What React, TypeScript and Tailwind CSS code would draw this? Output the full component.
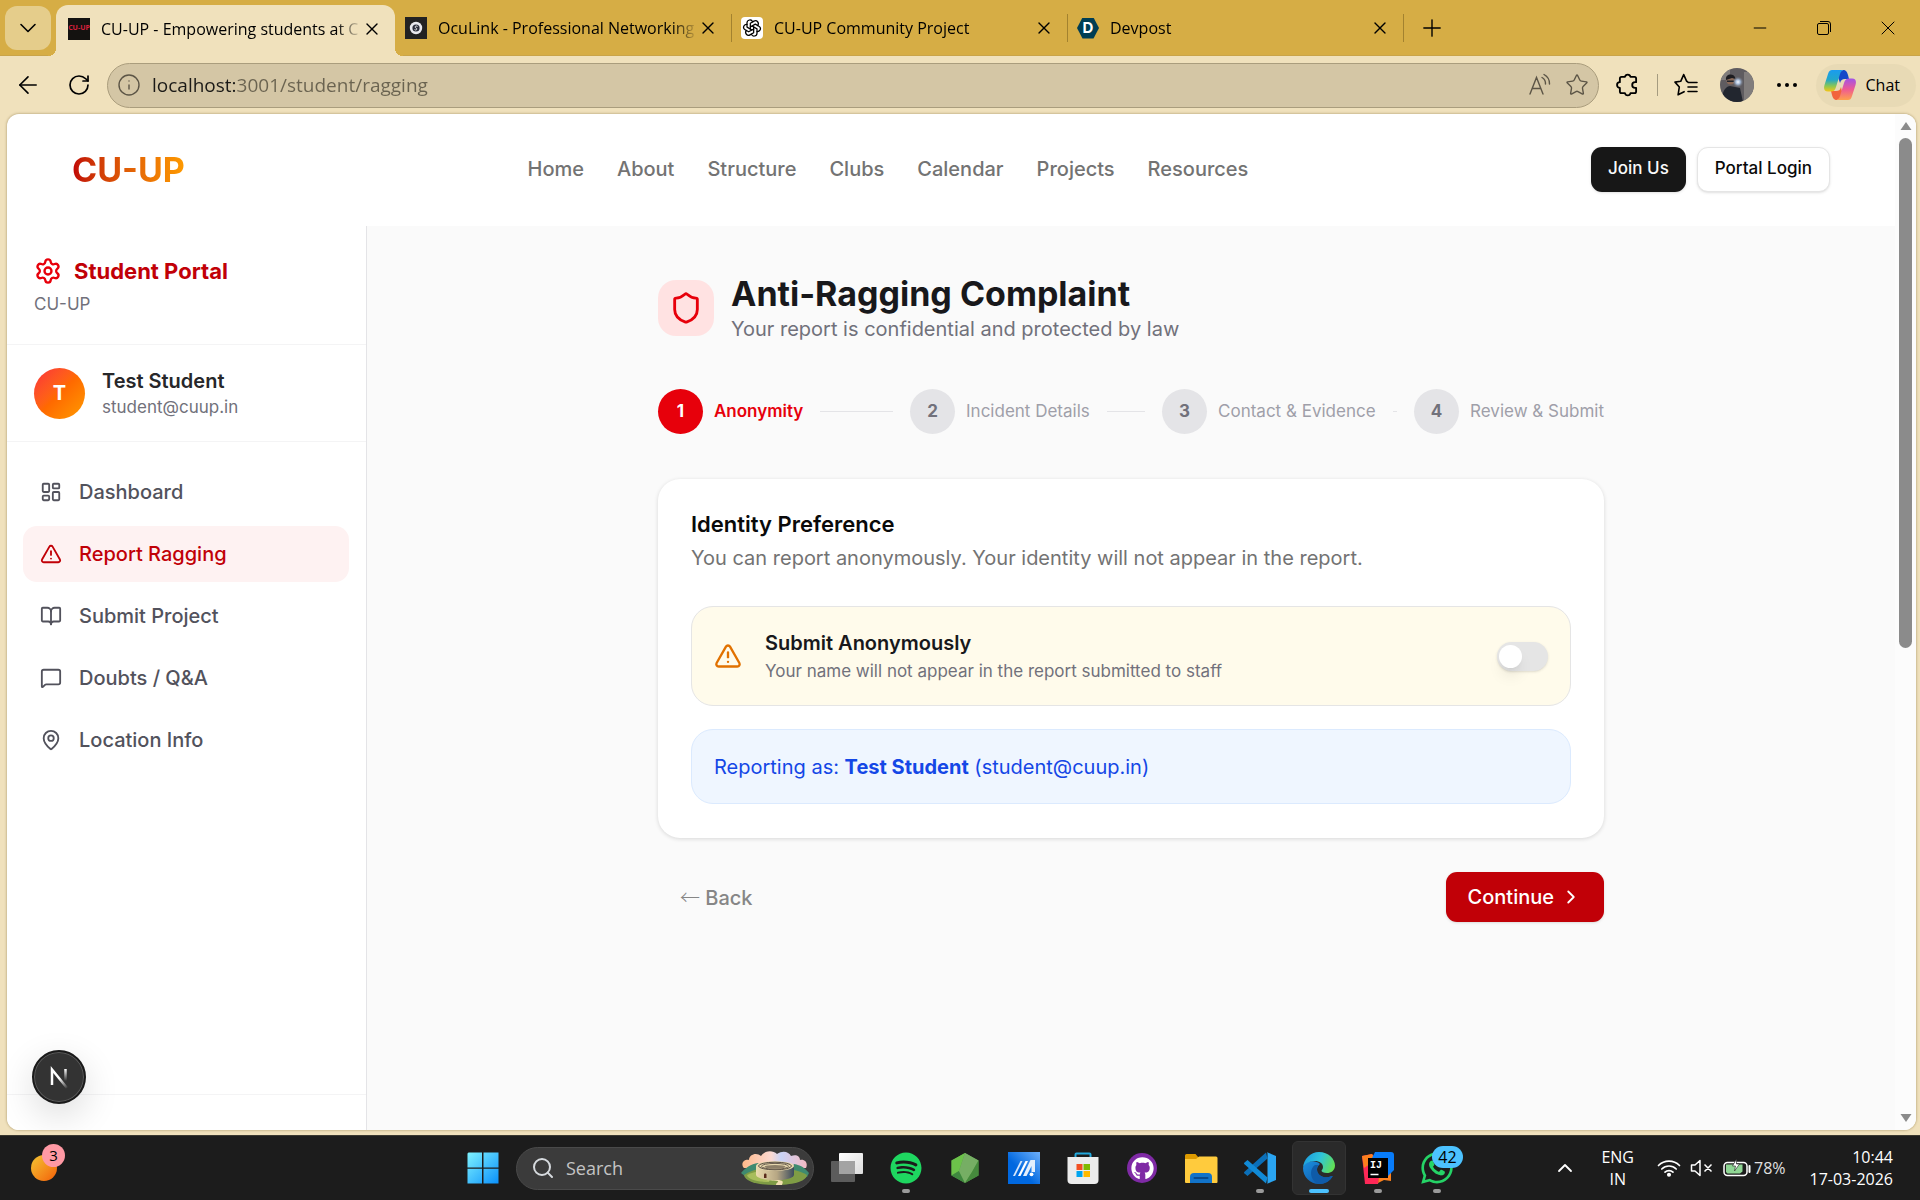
import type { ReactNode } from 'react'
import {
  ArrowLeft,
  BookOpen,
  ChevronDown,
  ChevronRight,
  ChevronUp,
  Info,
  LayoutDashboard,
  MapPin,
  MessageSquare,
  Minus,
  Plus,
  RotateCw,
  Search,
  Settings,
  Shield,
  Star,
  TriangleAlert,
  X,
} from 'lucide-react'
import type { LucideIcon } from 'lucide-react'
import { FaGithub, FaSpotify, FaWhatsapp } from 'react-icons/fa'
import { TbBrandOpenai } from 'react-icons/tb'
import clsx from 'clsx'

const siteLinks = ['Home', 'About', 'Structure', 'Clubs', 'Calendar', 'Projects', 'Resources']

const portalLinks: { label: string; icon: LucideIcon; active?: boolean }[] = [
  { label: 'Dashboard', icon: LayoutDashboard },
  { label: 'Report Ragging', icon: TriangleAlert, active: true },
  { label: 'Submit Project', icon: BookOpen },
  { label: 'Doubts / Q&A', icon: MessageSquare },
  { label: 'Location Info', icon: MapPin },
]

const steps = ['Anonymity', 'Incident Details', 'Contact & Evidence', 'Review & Submit']

export default function App() {
  return (
    <div className="flex h-screen min-h-[900px] flex-col overflow-hidden bg-[#f0e1bc] font-['Open_Sans',sans-serif] text-black">
      <TabStrip />
      <Toolbar />
      <div className="mr-1 mb-[5px] ml-[7px] flex min-h-0 flex-1 overflow-hidden rounded-xl bg-white font-['Inter',sans-serif] shadow-[0_0_2px_1px_rgba(120,100,50,0.3)]">
        <Page />
        <ScrollBar />
      </div>
      <Taskbar />
    </div>
  )
}

/* ---------- browser chrome ---------- */

function TabStrip() {
  return (
    <div className="flex h-14 shrink-0 items-stretch border-b border-[#c9a449] bg-[#d6ad45] pl-[5px]">
      <button
        aria-label="Tab actions"
        className="mt-[6px] mr-[5px] flex h-11 w-[46px] items-center justify-center rounded-xl bg-[#e5cd8b]"
      >
        <ChevronDown className="size-7" strokeWidth={1.4} />
      </button>
      <Tab
        active
        title="CU-UP - Empowering students at C"
        icon={
          <span className="flex size-[22px] items-center justify-center bg-[#141210] text-[7px] font-bold whitespace-nowrap text-[#d8203c]">
            CU-UP
          </span>
        }
      />
      <Tab title="OcuLink - Professional Networking" icon={<OcuIcon />} />
      <Tab
        divider
        title="CU-UP Community Project"
        icon={
          <span className="flex size-[22px] items-center justify-center rounded bg-white">
            <TbBrandOpenai className="size-5" strokeWidth={1.5} />
          </span>
        }
      />
      <Tab divider title="Devpost" icon={<DevpostIcon />} />
      <div className="my-auto h-7 w-px bg-[#a3822f]" />
      <button aria-label="New tab" className="ml-[14px]">
        <Plus className="size-7" strokeWidth={1.2} />
      </button>
      <div className="ml-auto flex">
        <button aria-label="Minimize" className="flex w-16 items-center justify-center">
          <Minus className="size-5" strokeWidth={1.2} />
        </button>
        <button aria-label="Restore" className="flex w-16 items-center justify-center">
          <svg viewBox="0 0 16 16" className="size-4" fill="none" stroke="currentColor">
            <rect x="1.5" y="3.5" width="11" height="11" rx="1.5" />
            <path d="M4 1.5h8a2.5 2.5 0 0 1 2.5 2.5v8" />
          </svg>
        </button>
        <button aria-label="Close" className="flex w-16 items-center justify-center">
          <X className="size-6" strokeWidth={1} />
        </button>
      </div>
    </div>
  )
}

interface TabProps {
  title: string
  icon: ReactNode
  active?: boolean
  divider?: boolean
}

function Tab({ title, icon, active = false, divider = false }: TabProps) {
  return (
    <div
      className={clsx(
        'relative flex items-center pr-[13px]',
        active ? '-mb-px mt-[5px] w-[339px] rounded-t-xl bg-[#f0e1bc] pb-1 pl-3' : 'w-[336px] pt-px pl-[10px]',
      )}
    >
      {divider && <span className="absolute top-[14px] left-0 h-7 w-px bg-[#a3822f]" />}
      {active && (
        <>
          <span className="absolute bottom-0 -left-2 size-2 bg-[radial-gradient(circle_at_0_0,#d6ad45_8px,#f0e1bc_8px)]" />
          <span className="absolute -right-2 bottom-0 size-2 bg-[radial-gradient(circle_at_100%_0,#d6ad45_8px,#f0e1bc_8px)]" />
        </>
      )}
      {icon}
      <span className="ml-[11px] min-w-0 flex-1 overflow-hidden mask-[linear-gradient(to_right,black_90%,transparent)] text-[16px] whitespace-nowrap">
        {title}
      </span>
      <button aria-label="Close tab">
        <X className="size-5" strokeWidth={1.6} />
      </button>
    </div>
  )
}

function OcuIcon() {
  return (
    <svg viewBox="0 0 22 22" className="size-[22px]">
      <rect width="22" height="22" fill="#222" />
      <circle cx="11" cy="11" r="6.2" fill="#e9e9ee" />
      <circle cx="11" cy="11" r="3.6" fill="#2a2d3a" />
      <path d="M12.6 9.4c-1.6-1-3 .2-2.2 1.2.7.8 2 .8 1.2 2-.5.6-1.4.5-2.1 0" fill="none" stroke="#fff" strokeWidth=".9" />
    </svg>
  )
}

function DevpostIcon() {
  return (
    <span className="flex h-[21px] w-[22px] items-center justify-center bg-[#003e54] font-['Inter',sans-serif] text-[15px] font-bold text-white [clip-path:polygon(25%_0,75%_0,100%_50%,75%_100%,25%_100%,0_50%)]">
      D
    </span>
  )
}

function Toolbar() {
  return (
    <div className="flex h-[58px] shrink-0 items-center pr-1 pl-[14px]">
      <button aria-label="Back">
        <ArrowLeft className="size-7" strokeWidth={1.4} />
      </button>
      <button aria-label="Refresh" className="ml-[25px]">
        <RotateCw className="size-6" strokeWidth={1.7} />
      </button>
      <div className="ml-4 flex h-[45px] flex-1 items-center rounded-full border border-[#aa9d7d] bg-[#d4c6a5] pr-[9px] pl-[9px] text-[#5c5546]">
        <Info className="size-6" strokeWidth={1.4} />
        <input
          aria-label="Address"
          defaultValue="localhost:3001/student/ragging"
          className="ml-[11px] min-w-0 flex-1 bg-linear-to-r from-[#1b1a17] from-[83px] to-[#6a6350] to-[83px] bg-clip-text text-[19px] text-transparent outline-none"
        />
        <button aria-label="Read aloud">
          <svg viewBox="0 0 24 24" className="size-6" fill="none" stroke="currentColor" strokeWidth="1.4" strokeLinecap="round">
            <path d="M2 21 8.5 4.5 15 21M4.3 15.5h8.4M14 4.5a7 7 0 0 1 3.5 6.5M16 1.5A10.5 10.5 0 0 1 21.500 11" />
          </svg>
        </button>
        <button aria-label="Add to favorites" className="ml-[13px]">
          <Star className="size-6" strokeWidth={1.4} />
        </button>
      </div>
      <button aria-label="Extensions" className="ml-4">
        <svg viewBox="0 0 24 24" className="size-[26px]" fill="none" stroke="currentColor" strokeWidth="1.7" strokeLinejoin="round">
          <path d="M6 4.500h3.200a2.600 2.600 0 0 1 5.100 0H18a1.500 1.500 0 0 1 1.500 1.500v3.400h-1a2.600 2.600 0 0 0 0 5.200h1V18a1.500 1.500 0 0 1-1.500 1.500h-3.700a2.600 2.600 0 0 1-5.100 0H6A1.500 1.500 0 0 1 4.500 18v-3.400a2.600 2.600 0 0 1 0-5.200V6A1.500 1.500 0 0 1 6 4.500Z" />
        </svg>
      </button>
      <div className="ml-4 h-[22px] w-px bg-[#a59b80]" />
      <button aria-label="Favorites" className="ml-4">
        <svg viewBox="0 0 24 24" className="size-6" fill="none" stroke="currentColor" strokeWidth="1.6" strokeLinecap="round" strokeLinejoin="round">
          <path d="m13.500 8.500-.8-.1L9.700 1.600 6.700 8.300l-5.700.8 4.300 4.900-1.200 7.800 6-3.100M14 9.500h9M14 14h9M14 18.500h9" />
        </svg>
      </button>
      <button aria-label="Profile" className="ml-[22px]">
        <ProfilePhoto />
      </button>
      <button aria-label="More" className="ml-[23px] flex w-5 justify-between">
        <span className="size-1 rounded-full bg-black" />
        <span className="size-1 rounded-full bg-black" />
        <span className="size-1 rounded-full bg-black" />
      </button>
      <button className="ml-[19px] flex h-[43px] items-center gap-[10px] rounded-full bg-[#e8dab5] pr-4 pl-2 text-[16px]">
        <CopilotIcon />
        Chat
      </button>
    </div>
  )
}

function ProfilePhoto() {
  return (
    <svg viewBox="0 0 34 34" className="size-[34px] rounded-full">
      <defs>
        <radialGradient id="flash">
          <stop offset="0" stopColor="#f4f8ff" />
          <stop offset=".4" stopColor="#a9bedb" />
          <stop offset="1" stopColor="#6d7483" stopOpacity="0" />
        </radialGradient>
      </defs>
      <rect width="34" height="34" fill="#5f5c60" />
      <path d="M0 0h10v12H0zM24 4h10v30H24z" fill="#817d7c" />
      <path d="M2 34c0-9 2-15 8-16l10 2 3 14z" fill="#22262f" />
      <circle cx="10.500" cy="12.500" r="4" fill="#8b6a58" />
      <path d="M6 12c-1-7 9-7 9.500-1L12 10z" fill="#1d1c20" />
      <path d="M7 12.500h7v1.500H7z" fill="#20242c" />
      <circle cx="18" cy="14" r="5.500" fill="url(#flash)" />
    </svg>
  )
}

function CopilotIcon() {
  return (
    <svg viewBox="0 0 32 30" className="h-[30px] w-8">
      <defs>
        <linearGradient id="cp-left" x1="0" y1="0" x2="0" y2="1">
          <stop offset="0" stopColor="#1a9bf0" />
          <stop offset=".45" stopColor="#22a7c9" />
          <stop offset=".75" stopColor="#8cc751" />
          <stop offset="1" stopColor="#f5c518" />
        </linearGradient>
        <linearGradient id="cp-right" x1="0" y1="0" x2="0" y2="1">
          <stop offset="0" stopColor="#a152e8" />
          <stop offset=".5" stopColor="#ee5a94" />
          <stop offset="1" stopColor="#ffa04c" />
        </linearGradient>
      </defs>
      <path d="M19 0c3 0 4 1.500 5 5l1 4h-4c-3 0-4 1-5 4L13 4z" fill="#1548c9" />
      <path d="M13 30c-3 0-4-1.500-5-5l-1-4h5c3 0 4-1 5-4l2 9z" fill="#f2643c" />
      <path d="M8 0h12c-2 0-3 1.500-4 4l-4 13c-1 3-2 4.500-5 4.500H4c-4 0-4.500-3-3.500-6.500L4 4c1-3 2-4 4-4Z" fill="url(#cp-left)" />
      <path d="M24 30H12c2 0 3-1.500 4-4l4-13c1-3 2-4.500 5-4.500h3c4 0 4.500 3 3.500 6.500L28 26c-1 3-2 4-4 4Z" fill="url(#cp-right)" />
    </svg>
  )
}

function ScrollBar() {
  return (
    <div className="flex w-[21px] shrink-0 flex-col items-center bg-[#fcfcfc] py-2">
      <svg viewBox="0 0 12 8" className="h-2 w-3" fill="#8b8b8b">
        <path d="M6 0 11.500 8H.5z" />
      </svg>
      <div className="mt-2 h-[51%] w-[13px] rounded-full bg-[#8b8b8b]" />
      <svg viewBox="0 0 12 8" className="mt-auto h-2 w-3" fill="#8b8b8b">
        <path d="M6 8 11.500 0H.5z" />
      </svg>
    </div>
  )
}

/* ---------- site ---------- */

function Page() {
  return (
    <div className="flex min-w-0 flex-1 flex-col">
      <header className="flex h-28 shrink-0 items-center justify-between px-[65px] pb-[2px]">
        <a
          href="#"
          className="bg-linear-to-r from-[#c10007] to-[#fe9a00] bg-clip-text text-[34px] font-bold text-transparent"
        >
          CU-UP
        </a>
        <nav className="flex gap-[33px] text-[20px] font-medium text-[#737373]">
          {siteLinks.map((label) => (
            <a key={label} href="#">
              {label}
            </a>
          ))}
        </nav>
        <div className="flex gap-[11px] text-[17px] font-medium">
          <button className="h-[45px] rounded-[11px] bg-[#171717] px-[17px] text-[#fafafa] shadow-sm">Join Us</button>
          <button className="h-[45px] rounded-[11px] border border-[#e5e5e5] bg-white px-[17px] text-[#0a0a0a] shadow-sm">
            Portal Login
          </button>
        </div>
      </header>
      <div className="flex min-h-0 flex-1">
        <Sidebar />
        <main className="flex-1 bg-[#fafafa] px-6 pt-[47px]">
          <ComplaintForm />
        </main>
      </div>
    </div>
  )
}

function Sidebar() {
  return (
    <aside className="relative flex w-[360px] shrink-0 flex-col border-r border-[#e4e4e7] bg-white">
      <div className="border-b border-zinc-100 p-7 pl-[27px]">
        <div className="flex items-center gap-3 text-[22px] leading-[34px] font-bold text-[#c10007]">
          <Settings className="size-7 text-[#e7000b]" />
          Student Portal
        </div>
        <p className="mt-1 text-[17px] leading-6 text-zinc-500">CU-UP</p>
      </div>
      <div className="flex items-center gap-[17px] border-b border-zinc-100 px-[27px] py-[22px]">
        <div className="flex size-[51px] items-center justify-center rounded-full bg-linear-to-br from-[#fb2c36] via-[#ff6900] to-[#fe9a00] text-[20px] font-bold text-white">
          T
        </div>
        <div>
          <p className="text-[20px] leading-7 font-semibold text-zinc-800">Test Student</p>
          <p className="text-[17px] leading-6 text-zinc-500">student@cuup.in</p>
        </div>
      </div>
      <nav className="flex flex-1 flex-col gap-[6px] pt-[22px] pr-[17px] pl-4">
        {portalLinks.map(({ label, icon: Icon, active }) => (
          <a
            key={label}
            href="#"
            className={clsx(
              'flex h-14 items-center gap-[17px] rounded-[14px] px-[17px] text-[20px] font-medium',
              active ? 'bg-red-50 text-[#c10007]' : 'text-zinc-600',
            )}
          >
            <Icon className="size-[22px]" />
            {label}
          </a>
        ))}
      </nav>
      <div className="h-9 border-t border-zinc-100" />
      <DevBadge />
    </aside>
  )
}

function DevBadge() {
  return (
    <button
      aria-label="Open dev tools"
      className="absolute bottom-[26px] left-[25px] flex size-[54px] items-center justify-center rounded-full border-2 border-[#1a1a1a] bg-[#333] shadow-[0_12px_36px_rgba(0,0,0,0.14),inset_0_0_0_1px_#5a5a5a]"
    >
      <svg viewBox="0 0 20 24" className="h-6 w-5" fill="none" strokeWidth="2.500">
        <defs>
          <linearGradient id="n-diag" gradientUnits="userSpaceOnUse" x1="11" y1="13" x2="19" y2="23">
            <stop stopColor="#fff" />
            <stop offset="1" stopColor="#fff" stopOpacity="0" />
          </linearGradient>
          <linearGradient id="n-stem" gradientUnits="userSpaceOnUse" x1="17" y1="4" x2="17" y2="16">
            <stop stopColor="#fff" />
            <stop offset="1" stopColor="#fff" stopOpacity="0" />
          </linearGradient>
        </defs>
        <path d="M3 20V4.500L18 23" stroke="url(#n-diag)" />
        <path d="M16.500 4v12" stroke="url(#n-stem)" />
      </svg>
    </button>
  )
}

function ComplaintForm() {
  return (
    <div className="mx-auto max-w-[946px]">
      <div className="flex items-center gap-[17px]">
        <div className="flex size-14 items-center justify-center rounded-[18px] bg-[#ffe2e2]">
          <Shield className="size-[34px] text-[#e7000b]" />
        </div>
        <div>
          <h1 className="text-[34px] leading-[42px] font-bold text-zinc-900">Anti-Ragging Complaint</h1>
          <p className="text-[20px] leading-7 text-zinc-500">Your report is confidential and protected by law</p>
        </div>
      </div>

      <ol className="mt-[46px] flex items-center text-[17px]">
        {steps.map((label, i) => (
          <li key={label} className={clsx('flex items-center', i < steps.length - 1 && 'flex-1')}>
            <span
              className={clsx(
                'flex size-[45px] shrink-0 items-center justify-center rounded-full font-bold',
                i === 0 ? 'bg-[#e7000b] text-white' : 'bg-zinc-200 text-zinc-500',
              )}
            >
              {i + 1}
            </span>
            <span
              className={clsx(
                'ml-[11px] whitespace-nowrap',
                i === 0 ? 'font-semibold text-[#e7000b]' : 'text-zinc-400',
              )}
            >
              {label}
            </span>
            {i < steps.length - 1 && <span className="mx-[17px] h-px flex-1 bg-zinc-200" />}
          </li>
        ))}
      </ol>

      <section className="mt-[45px] rounded-[22px] bg-white p-[33px] pb-[34px] shadow-[0_1px_4px_rgba(0,0,0,0.14)]">
        <h2 className="text-[22px] leading-6 font-semibold text-[#0a0a0a]">Identity Preference</h2>
        <p className="mt-2 text-[20px] leading-7 text-[#737373]">
          You can report anonymously. Your identity will not appear in the report.
        </p>

        <div className="mt-[34px] flex h-[100px] items-center rounded-[22px] border border-[#e5e5e5] bg-amber-50 px-[22px]">
          <TriangleAlert className="size-7 text-[#e17100]" />
          <label htmlFor="anonymous" className="ml-[23px] flex-1 pt-[2px]">
            <span className="block text-[20px] leading-7 font-semibold text-zinc-900">Submit Anonymously</span>
            <span className="block text-[17px] leading-7 text-zinc-500">
              Your name will not appear in the report submitted to staff
            </span>
          </label>
          <input
            id="anonymous"
            type="checkbox"
            role="switch"
            className="h-[29px] w-[51px] appearance-none rounded-full bg-[#e5e5e5] p-[3px] pl-[2px] shadow-sm before:block before:size-[23px] before:rounded-full before:bg-white before:shadow-lg checked:bg-[#171717] checked:before:translate-x-6"
          />
        </div>

        <p className="mt-[23px] flex h-[75px] items-center rounded-[22px] border border-blue-100 bg-blue-50 px-[22px] text-[20px] text-[#1447e6]">
          <span>
            Reporting as: <strong>Test Student</strong> (student@cuup.in)
          </span>
        </p>
      </section>

      <div className="mt-[34px] flex items-center justify-between text-[20px] font-medium">
        <button className="px-[22px] text-[#868686]">
          <span className="font-['Noto_Sans_CJK_JP',sans-serif] font-light">←</span> Back
        </button>
        <button className="flex h-[50px] items-center gap-[6px] rounded-[11px] bg-[#c10007] px-[22px] text-white shadow-sm">
          Continue
          <ChevronRight className="size-[22px]" />
        </button>
      </div>
    </div>
  )
}

/* ---------- taskbar ---------- */

function Taskbar() {
  return (
    <footer className="grid h-[65px] shrink-0 grid-cols-[1fr_auto_1fr] items-center border-t border-[#3a382f] bg-[#1c1c1c] text-white">
      <button aria-label="Widgets" className="relative ml-[31px] size-[26px] rounded-full bg-linear-to-br from-[#f0c432] to-[#f25c05]">
        <span className="absolute -top-[11px] left-[11px] flex size-[23px] items-center justify-center rounded-full bg-[#ff99a4] text-[15px] text-black">
          3
        </span>
      </button>
      <div className="flex items-center gap-[5px]">
        <TaskItem label="Start">
          <StartIcon />
        </TaskItem>
        <label className="mx-px flex h-[43px] w-[298px] items-center rounded-full border border-[#4a4a4a] bg-[#3b3b3b] pr-1 pl-[14px]">
          <Search className="size-6 shrink-0 text-[#d6dade]" />
          <input
            aria-label="Search"
            placeholder="Search"
            className="ml-[11px] w-full min-w-0 text-[18px] outline-none placeholder:text-[#c4c4c4]"
          />
          <ColosseumArt />
        </label>
        <TaskItem label="Task view">
          <TaskViewIcon />
        </TaskItem>
        <TaskItem label="Spotify" running>
          <FaSpotify className="size-8 text-[#1ed760]" />
        </TaskItem>
        <TaskItem label="Node.js">
          <NodeIcon />
        </TaskItem>
        <TaskItem label="MyASUS">
          <AsusIcon />
        </TaskItem>
        <TaskItem label="Microsoft Store">
          <StoreIcon />
        </TaskItem>
        <TaskItem label="GitHub Desktop">
          <span className="flex size-[30px] items-center justify-center rounded-full bg-[#7f2aa5]">
            <FaGithub className="size-[23px]" />
          </span>
        </TaskItem>
        <TaskItem label="File Explorer">
          <FolderIcon />
        </TaskItem>
        <TaskItem label="Visual Studio Code" running>
          <CodeIcon />
        </TaskItem>
        <TaskItem label="Microsoft Edge" focused>
          <EdgeIcon />
        </TaskItem>
        <TaskItem label="IntelliJ IDEA" running>
          <IdeaIcon />
        </TaskItem>
        <TaskItem label="WhatsApp" running>
          <FaWhatsapp className="size-9 text-[#25d366]" />
          <span className="absolute top-[5px] left-[22px] flex h-[22px] w-[31px] items-center justify-center rounded-full bg-[#4cc2ff] text-[16px] text-black">
            42
          </span>
        </TaskItem>
      </div>
      <Tray />
    </footer>
  )
}

interface TaskItemProps {
  label: string
  children: ReactNode
  running?: boolean
  focused?: boolean
}

function TaskItem({ label, children, running, focused }: TaskItemProps) {
  return (
    <button
      aria-label={label}
      className={clsx(
        'relative flex size-[54px] items-center justify-center rounded-md',
        focused && 'border border-[#333] bg-[#2a2a2a]',
      )}
    >
      {children}
      {running && <span className="absolute bottom-[2px] h-1 w-2 rounded-full bg-[#9a9a9a]" />}
      {focused && <span className="absolute bottom-px h-1 w-5 rounded-full bg-[#4cc2ff]" />}
    </button>
  )
}

function StartIcon() {
  return (
    <svg viewBox="0 0 32 32" className="size-8">
      <defs>
        <linearGradient id="win" x1="0" y1="0" x2="1" y2="1">
          <stop stopColor="#7ff3ff" />
          <stop offset="1" stopColor="#0a90fb" />
        </linearGradient>
      </defs>
      <path d="M1.500 .5H15v15H.5V1.500zM16.500.5H31.500v15h-15zM.5 16.800H15v14.700H.5zM16.500 16.800h15v14.700h-15z" fill="url(#win)" />
    </svg>
  )
}

function ColosseumArt() {
  return (
    <svg viewBox="0 0 68 34" className="h-[34px] w-[68px] shrink-0">
      <defs>
        <linearGradient id="cloud" x1="0" x2="1">
          <stop stopColor="#ffb98a" />
          <stop offset=".45" stopColor="#fbd9d2" />
          <stop offset=".6" stopColor="#c9d3f7" />
          <stop offset="1" stopColor="#f3b9c2" />
        </linearGradient>
        <linearGradient id="wall" x1="0" x2="1">
          <stop stopColor="#ecdcae" />
          <stop offset=".55" stopColor="#b7a784" />
          <stop offset="1" stopColor="#3c4c5c" />
        </linearGradient>
      </defs>
      <path d="M3 17c-4-4 0-9 5-8 0-6 8-8 12-4 4-6 12-6 16-2 6-4 12-2 14 2 5-2 9 0 9 4 6-1 8 4 6 8z" fill="url(#cloud)" />
      <path d="M0 22c4-5 10-9 17-10l8 10-20 4zM68 22c-4-5-8-8-15-9l-6 9 19 4z" fill="#3f8a70" />
      <path d="M3 24c8-6 20-7 31-7s24 2 32 7c-1 7-16 10-32 10S4 31 3 24Z" fill="#7f9c45" />
      <path d="M6 24c8-4 17-5 26-5l-4 12C15 31 7 28 6 24Z" fill="#a8bd5b" />
      <path d="M15 15v9c2 7 36 7 38 0v-9z" fill="url(#wall)" />
      <ellipse cx="34" cy="15" rx="19" ry="4.800" fill="#e8d8ae" />
      <ellipse cx="34" cy="15" rx="16.500" ry="3.800" fill="none" stroke="#554b40" strokeWidth="1" />
      <ellipse cx="34" cy="15.300" rx="13.500" ry="2.900" fill="none" stroke="#6b5f50" strokeWidth="1" />
      <ellipse cx="34" cy="15.800" rx="10.500" ry="1.900" fill="#8d7f68" />
      <path d="M23 27v-3.500c0-1.500 2.500-1.500 2.500 0V27z" fill="#5a2c1c" />
      <path d="M25 29c4 1 14 0 12 2-1 1-2 1-2 3h6c1-3 2-4-3-5z" fill="#f1dfb0" />
    </svg>
  )
}

function TaskViewIcon() {
  return (
    <svg viewBox="0 0 32 32" className="size-8">
      <defs>
        <linearGradient id="tv" x1="0" y1="0" x2="1" y2="1">
          <stop stopColor="#fff" />
          <stop offset="1" stopColor="#dcdcdc" />
        </linearGradient>
      </defs>
      <rect y="9" width="24" height="21" rx="1" fill="#5c5c5c" />
      <rect x="8" y="1" width="24" height="21" rx="1" fill="url(#tv)" />
      <path d="M8 9h16v13H8z" fill="#a3a3a3" />
    </svg>
  )
}

function NodeIcon() {
  return (
    <svg viewBox="0 0 28 32" className="h-8 w-7">
      <path d="M14 1 27.500 8.500v15L14 31 .5 23.500v-15z" fill="#539e43" />
      <path d="M14 1 .5 8.500v15L8 19z" fill="#6cc24a" />
      <path d="M.5 23.500 8 19l6 12z" fill="#3f873f" />
      <path d="M14 1 27.500 8.500 21 20 14 31 8 19z" fill="#76ae64" />
      <path d="M27.500 8.500v15L14 31l7-11z" fill="#468a3d" />
    </svg>
  )
}

function AsusIcon() {
  return (
    <svg viewBox="0 0 32 32" className="size-8">
      <defs>
        <linearGradient id="asus" x1="0" y1="1" x2="1" y2="0">
          <stop offset=".4" stopColor="#0068e0" />
          <stop offset="1" stopColor="#6fb0fa" />
        </linearGradient>
      </defs>
      <path d="M0 0h32v32H0z" fill="url(#asus)" />
      <path d="M5 24 12.500 9h2L7 24z" fill="#d5e6fb" />
      <path d="M10 24 17.500 9h2.500l-7.500 15z" fill="#fff" />
      <path d="M15 24 22.500 8H27v12h-3.500v-6L18.500 24z" fill="#e4effc" />
      <circle cx="23.500" cy="22.300" r="1.900" fill="#fff" />
    </svg>
  )
}

function StoreIcon() {
  return (
    <svg viewBox="0 0 32 32" className="size-8">
      <path d="M8.500 6V2.500a1 1 0 0 1 1-1h13a1 1 0 0 1 1 1V6" fill="none" stroke="#22a8dc" strokeWidth="2" />
      <path d="M.5 5h31v23a4 4 0 0 1-4 4h-23a4 4 0 0 1-4-4z" fill="#ececec" />
      <path d="M9.500 12h6v6h-6z" fill="#f25022" />
      <path d="M16.500 12h6.500v6h-6.500z" fill="#7fba00" />
      <path d="M9.500 19h6v6h-6z" fill="#00a4ef" />
      <path d="M16.500 19h6.500v6h-6.500z" fill="#ffb900" />
    </svg>
  )
}

function FolderIcon() {
  return (
    <svg viewBox="0 0 34 32" className="h-8 w-[34px]">
      <path d="M1 3.500A1.500 1.500 0 0 1 2.500 2h9l3 3.500V12H1z" fill="#dd9a00" />
      <path d="M1 7h11l3-2.500h17a1.500 1.500 0 0 1 1.500 1.500v24a1 1 0 0 1-1 1H2a1 1 0 0 1-1-1z" fill="#ffcb3d" />
      <path d="M6 31v-6a4 4 0 0 1 4-4h14a4 4 0 0 1 4 4v6z" fill="#1273c9" />
      <path d="M10.500 26h13" stroke="#0a4a8c" strokeWidth="2" strokeLinecap="round" />
    </svg>
  )
}

function CodeIcon() {
  return (
    <svg viewBox="0 0 32 32" className="size-8">
      <path d="M23.500 6.500 3.500 24l-3-2.500a1.200 1.200 0 0 1 0-1.800L22 .5z" fill="#0b6fb8" />
      <path d="M23.500 25.500 3.500 8l-3 2.500a1.200 1.200 0 0 0 0 1.800L22 31.500z" fill="#118ad6" />
      <path d="M22.500 0 32 4v24l-9.500 4c.8 0 1-1 1-2V2c0-1-.2-2-1-2Z" fill="#2aa5f2" />
    </svg>
  )
}

function EdgeIcon() {
  return (
    <svg viewBox="0 0 32 32" className="size-8">
      <defs>
        <linearGradient id="edge-top" x1="0" y1=".3" x2="1" y2=".6">
          <stop stopColor="#1b9de2" />
          <stop offset=".5" stopColor="#30c5d8" />
          <stop offset="1" stopColor="#63e052" />
        </linearGradient>
        <linearGradient id="edge-low" x1="0" y1="0" x2="1" y2="1">
          <stop stopColor="#1b8fe0" />
          <stop offset="1" stopColor="#0c4f9e" />
        </linearGradient>
      </defs>
      <path d="M0 16C0 24.800 7.200 32 16 32c5.500 0 10.500-2.800 13.400-7.200.4-.7-.3-1-.8-.7-6.600 3.200-14.600-.1-14.600-6.600 0-2.500 1.500-4.300 3-5.500C13 8 2 8 0 16Z" fill="url(#edge-low)" />
      <path d="M12 13C6 17 6.500 28 15.500 32 22 32.400 27 29 29.400 24.800c.4-.7-.3-1-.8-.7C22 27.300 14 24 14 17.500c0-2 .5-3.500 2-4.500z" fill="#0f5ba8" />
      <path d="M0 16C.5 7 7.500 0 16 0c9.500 0 16 7 16 13.500 0 5-4 7.500-8 7.500-3.500 0-5.500-1.200-5.500-2.200 0-.8 1.500-1.400 1.500-3.800C20 11.500 16.500 9 12 9 6 9 1 12 0 16Z" fill="url(#edge-top)" />
    </svg>
  )
}

function IdeaIcon() {
  return (
    <svg viewBox="0 0 32 32" className="size-8">
      <path d="M0 4 10 2l10 14-4 16H3z" fill="#fe2857" />
      <path d="M0 4 10 2l4 6-12 8z" fill="#fc801d" />
      <path d="M18 20h11v9l-7-1-6 3z" fill="#fc801d" />
      <path d="M13 0h16a3 3 0 0 1 3 3v15l-6 6L10 6z" fill="#087cfa" />
      <path d="M6 6h20v20H6z" />
      <path d="M8.500 22.500h8" stroke="#fff" strokeWidth="1.500" />
      <text x="8" y="15.500" fontSize="10" fontWeight="700" fontFamily="Liberation Mono, monospace" fill="#fff">
        IJ
      </text>
    </svg>
  )
}

function Tray() {
  return (
    <div className="flex items-center justify-end pr-[27px] text-[16px]">
      <button aria-label="Show hidden icons">
        <ChevronUp className="size-6" strokeWidth={1.8} />
      </button>
      <div className="ml-6 text-center leading-[22px]">
        ENG
        <br />
        IN
      </div>
      <svg viewBox="0 0 24 18" className="ml-[23px] h-[18px] w-6" fill="none" stroke="currentColor" strokeWidth="1.700" strokeLinecap="round">
        <path d="M1.500 6.500a15 15 0 0 1 21 0M4.800 10a10.200 10.200 0 0 1 14.400 0M8 13.200a5.700 5.700 0 0 1 8 0" />
        <circle cx="12" cy="15.800" r="1.200" fill="currentColor" />
      </svg>
      <svg viewBox="0 0 24 18" className="ml-[9px] h-[18px] w-6" fill="none" stroke="currentColor" strokeWidth="1.500" strokeLinejoin="round">
        <path d="M1.500 6h3.500l5-4.500v15L5 12H1.500zM14.500 5.500l7 7M21.500 5.500l-7 7" />
      </svg>
      <svg viewBox="0 0 28 18" className="ml-[9px] h-[18px] w-7" fill="none">
        <rect x="1" y="3.500" width="23" height="13" rx="3.500" stroke="#fff" strokeWidth="1.500" />
        <path d="M3 5.500h16.500v7l-2.500 2H4.500L3 13z" fill="#8fd694" />
        <path d="M26.500 7v6" stroke="#fff" strokeWidth="2" strokeLinecap="round" />
        <path d="m13.500 0-4 7h3l-1 5 5-7h-3z" fill="#fff" stroke="#1c1c1c" strokeWidth=".6" />
      </svg>
      <span className="ml-[3px] text-[#e0e0e0]">78%</span>
      <div className="ml-6 text-right leading-[22px]">
        10:44
        <br />
        17-03-2026
      </div>
    </div>
  )
}
